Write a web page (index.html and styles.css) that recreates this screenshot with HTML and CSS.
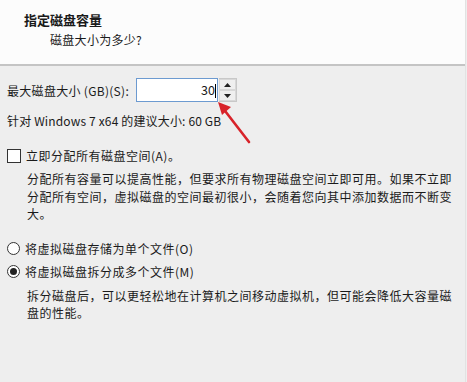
FILE: index.html
```html
<!DOCTYPE html>
<html>
<head>
<meta charset="utf-8">
<link rel="stylesheet" href="styles.css">
</head>
<body>
<div class="page">
  <header class="head">
    <div class="title">指定磁盘容量</div>
    <div class="subtitle">磁盘大小为多少?</div>
  </header>
  <main class="content">
    <div class="size-row">
      <span class="label">最大磁盘大小 (GB)(S):</span>
      <div class="spin">
        <div class="spin-input">30<span class="caret"></span></div>
        <div class="spin-btns">
          <div class="spin-btn"><svg width="7" height="4" viewBox="0 0 7 4"><path d="M0 4 L3.5 0 L7 4Z" fill="#222"/></svg></div>
          <div class="spin-btn"><svg width="7" height="4" viewBox="0 0 7 4"><path d="M0 0 L3.5 4 L7 0Z" fill="#222"/></svg></div>
        </div>
        <svg class="arrow" width="50" height="50" viewBox="0 0 50 50">
          <line x1="35" y1="41" x2="8" y2="6" stroke="#d8232a" stroke-width="2.6" stroke-linecap="round"/>
          <path d="M4 1 L17 6 L8 14 Z" fill="#d8232a"/>
        </svg>
      </div>
    </div>
    <div class="hint">针对 Windows 7 x64 的建议大小: 60 GB</div>
    <div class="check-row">
      <span class="checkbox"></span>
      <span class="cjk">立即分配所有磁盘空间(A)。</span>
    </div>
    <p class="desc">分配所有容量可以提高性能，但要求所有物理磁盘空间立即可用。如果不立即分配所有空间，虚拟磁盘的空间最初很小，会随着您向其中添加数据而不断变大。</p>
    <div class="radio-row first">
      <span class="radio"></span>
      <span class="cjk">将虚拟磁盘存储为单个文件(O)</span>
    </div>
    <div class="radio-row">
      <span class="radio checked"></span>
      <span class="cjk">将虚拟磁盘拆分成多个文件(M)</span>
    </div>
    <p class="desc">拆分磁盘后，可以更轻松地在计算机之间移动虚拟机，但可能会降低大容量磁盘的性能。</p>
  </main>
</div>
</body>
</html>
```
FILE: styles.css
```css
html, body {
  margin: 0;
  padding: 0;
}
body {
  width: 467px;
  height: 382px;
  overflow: hidden;
  background: #eeeeee;
  font-family: "Noto Sans CJK SC", "DejaVu Sans", sans-serif;
  font-size: 12px;
  color: #1a1a1a;
}
.page {
  width: 465px;
  height: 382px;
  border-right: 1px solid #e2e2e2;
  background: #eeeeee;
}
.head {
  background: #fcfcfc;
  height: 64px;
  border-bottom: 2px solid #c4c4c4;
  box-sizing: content-box;
}
.title {
  padding: 10px 0 0 24px;
  font-weight: bold;
  font-size: 13px;
  line-height: 20px;
}
.subtitle {
  padding-left: 50px;
  line-height: 20px;
  letter-spacing: 0.3px;
}
.content {
  padding: 12px 7px 0 7px;
}
.size-row {
  display: flex;
  align-items: center;
  height: 24px;
}
.label {
  width: 129px;
  letter-spacing: 0.3px;
}
.spin {
  position: relative;
  display: flex;
  height: 24px;
}
.spin-input {
  width: 80px;
  height: 22px;
  border: 1px solid #6c9ad0;
  background: #fff;
  box-sizing: content-box;
  text-align: right;
  line-height: 22px;
  font-size: 12.5px;
}
.caret {
  display: inline-block;
  width: 1px;
  height: 14px;
  background: #000;
  vertical-align: -3px;
  margin-right: 1px;
}
.spin-btns {
  display: flex;
  flex-direction: column;
  width: 17px;
  border: 1px solid #c8c8c8;
  border-left: none;
  background: #e6e6e6;
  margin-left: 1px;
}
.spin-btn {
  flex: 1;
  display: flex;
  align-items: center;
  justify-content: center;
  border: 1px solid #d8d8d8;
  background: #efefef;
}
.arrow {
  position: absolute;
  left: 78px;
  top: 23px;
}
.hint {
  margin-top: 9px;
  line-height: 20px;
  letter-spacing: 0.15px;
}
.check-row {
  display: flex;
  align-items: center;
  gap: 5px;
  margin-top: 16px;
  line-height: 18px;
}
.cjk {
  letter-spacing: 0.5px;
}
.checkbox {
  width: 12px;
  height: 12px;
  border: 1px solid #333;
  background: #fff;
}
.desc {
  margin: 5px 0 0 20px;
  line-height: 17.5px;
  padding-right: 4px;
  letter-spacing: 0.5px;
  color: #1a1a1a;
}
.radio-row {
  display: flex;
  align-items: center;
  gap: 5px;
  line-height: 20px;
  margin-top: 3px;
}
.radio-row.first {
  margin-top: 16px;
}
.radio {
  width: 11px;
  height: 11px;
  border: 1px solid #333;
  border-radius: 50%;
  background: #fff;
  position: relative;
}
.radio.checked::after {
  content: "";
  position: absolute;
  left: 2px;
  top: 2px;
  width: 7px;
  height: 7px;
  border-radius: 50%;
  background: #222;
}
```
